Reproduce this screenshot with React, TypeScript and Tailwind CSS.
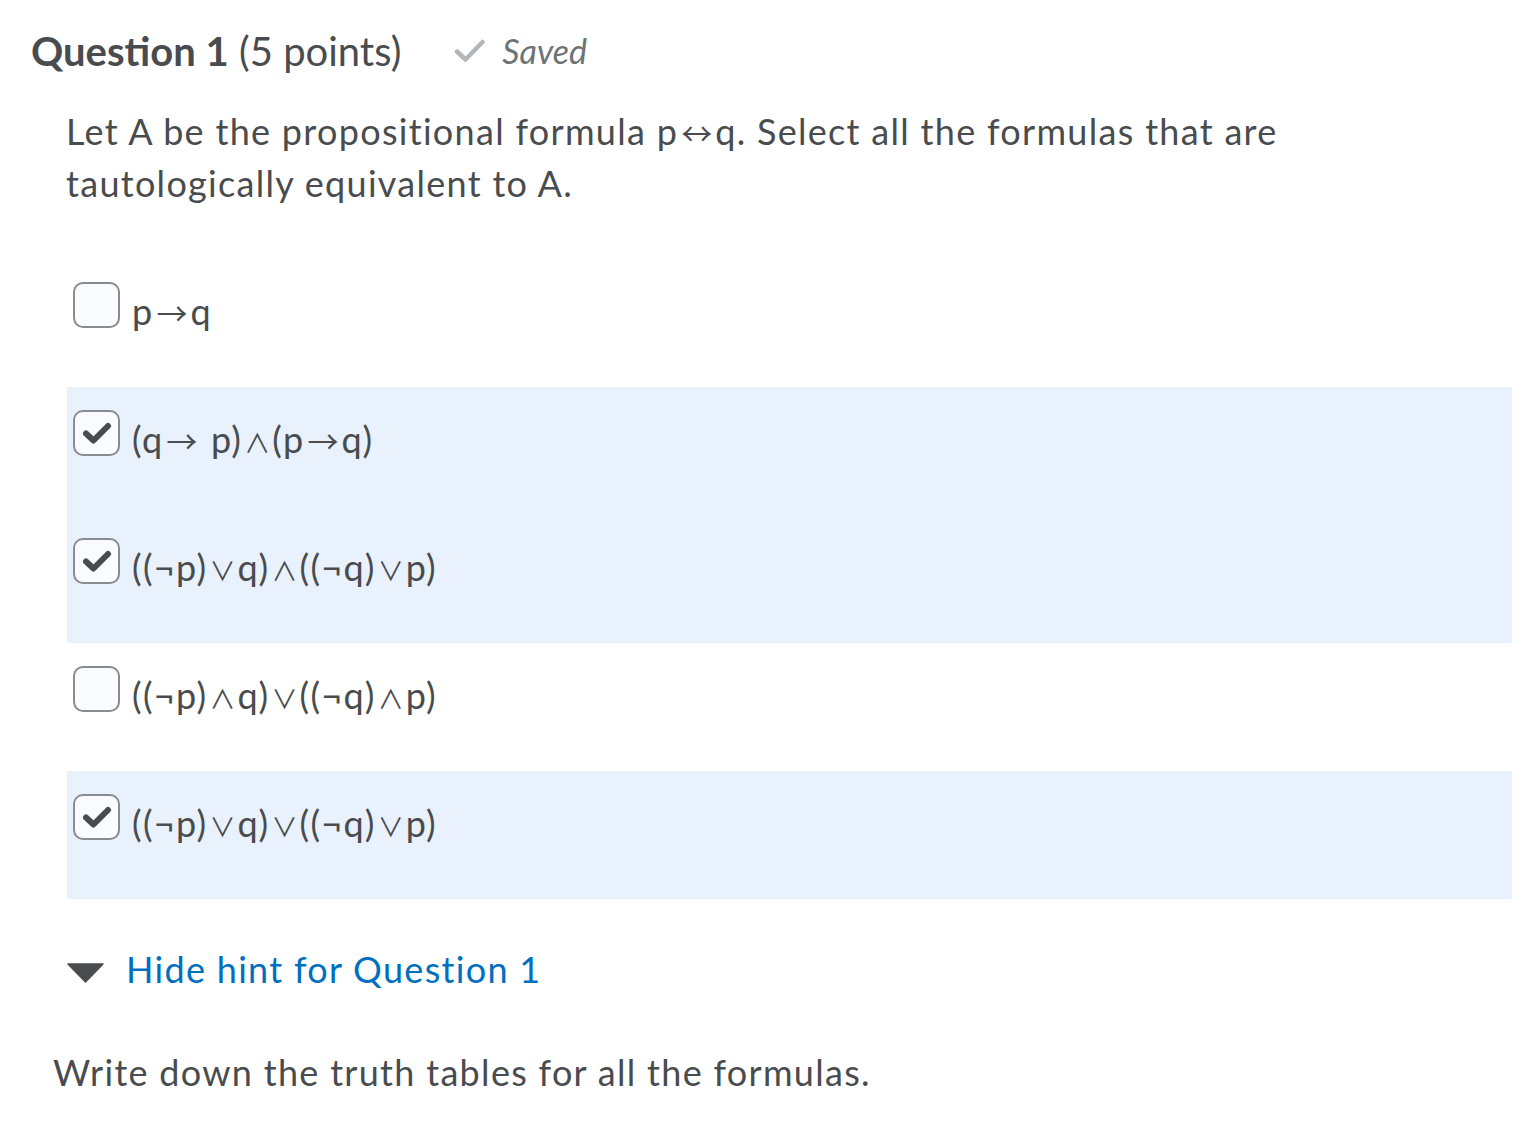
import React from "react";

function Sym({ text }: { text: string }) {
  const parts = Array.from(text);
  return (
    <>
      {parts.map((c, i) => {
        if (c === "→" || c === "↔") {
          return (
            <span key={i} className="mx-[3px] text-[31px] leading-none tracking-normal font-['Noto_Sans_CJK_SC',sans-serif]">
              {c}
            </span>
          );
        }
        if (c === "∧" || c === "∨") {
          return (
            <span key={i} className="mx-[2px] text-[26px] leading-none tracking-normal font-['Noto_Sans_CJK_SC',sans-serif]">
              {c}
            </span>
          );
        }
        return <React.Fragment key={i}>{c}</React.Fragment>;
      })}
    </>
  );
}

function Box({ checked }: { checked: boolean }) {
  return (
    <div className="w-[47px] h-[46px] shrink-0 rounded-[10px] border-2 border-[#868c92] bg-[#f9fbff] flex items-center justify-center">
      {checked && (
        <svg width="30" height="24" viewBox="0 0 30 24">
          <path d="M4 12.5 L11.5 19.5 L26 5" fill="none" stroke="#494c4e" strokeWidth="6" strokeLinecap="round" strokeLinejoin="round" />
        </svg>
      )}
    </div>
  );
}

const options = [
  { text: "p→q", checked: false },
  { text: "(q→ p)∧(p→q)", checked: true },
  { text: "((¬p)∨q)∧((¬q)∨p)", checked: true },
  { text: "((¬p)∧q)∨((¬q)∧p)", checked: false },
  { text: "((¬p)∨q)∨((¬q)∨p)", checked: true },
];

export default function App() {
  return (
    <div className="w-[1539px] h-[1123px] bg-white text-[#494c4e] font-['Lato','Noto_Sans',sans-serif]">
      <div className="pt-[27px] pl-[31px] flex items-center">
        <span className="text-[40px] leading-[48px]">
          <span className="font-bold">Question 1</span> (5 points)
        </span>
        <span className="ml-[53px] flex items-center">
          <svg width="32" height="26" viewBox="0 0 32 26">
            <path d="M3 13.5 L11.5 21.5 L28.5 4" fill="none" stroke="#b1b7bb" strokeWidth="4.5" strokeLinecap="round" strokeLinejoin="round" />
          </svg>
          <span className="ml-[16px] text-[34px] italic text-[#6e7376] leading-[48px]">Saved</span>
        </span>
      </div>

      <p className="mt-[30px] ml-[66px] w-[1300px] h-[104px] text-[36px] leading-[52px] tracking-[1.3px]">
        Let A be the propositional formula p<Sym text="↔" />q. Select all the formulas that are tautologically equivalent to A.
      </p>

      <div className="mt-[50px] ml-[67px] w-[1445px]">
        {options.map((o, i) => (
          <div key={i} className={`h-[128px] flex items-start pt-[23px] pl-[6px] ${o.checked ? "bg-[#e8f1fc]" : ""}`}>
            <Box checked={o.checked} />
            <span className="ml-[12px] mt-[6px] h-[46px] text-[36px] leading-[46px] whitespace-pre tracking-[1.3px]">
              <Sym text={o.text} />
            </span>
          </div>
        ))}
      </div>

      <div className="mt-[47px] ml-[67px] flex items-center">
        <svg width="37" height="20" viewBox="0 0 37 20" className="mt-[8px]">
          <path d="M1 1 L36 1 L18.5 19 Z" fill="#494c4e" stroke="#494c4e" strokeWidth="1.5" strokeLinejoin="round" />
        </svg>
        <span className="ml-[22px] text-[36px] leading-[46px] text-[#006fbf] tracking-[1.3px]">Hide hint for Question 1</span>
      </div>

      <p className="mt-[57px] ml-[53px] text-[36px] leading-[46px] tracking-[1.3px]">Write down the truth tables for all the formulas.</p>
    </div>
  );
}
